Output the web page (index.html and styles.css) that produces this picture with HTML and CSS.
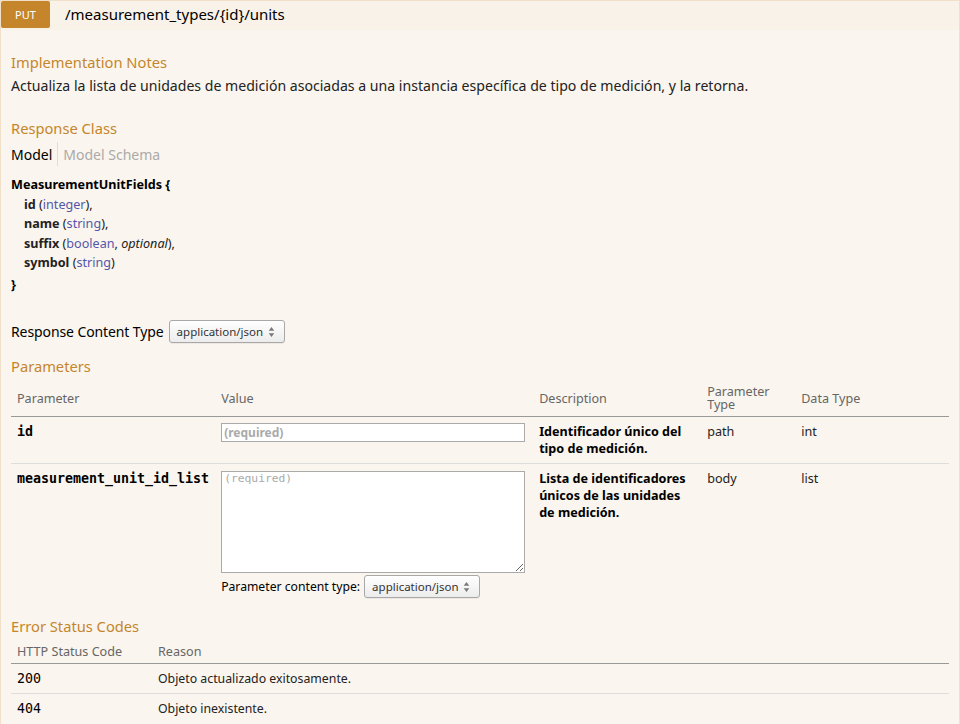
FILE: index.html
```
<!DOCTYPE html>
<html lang="es">
<head>
<meta charset="utf-8">
<title>PUT /measurement_types/{id}/units</title>
<link rel="stylesheet" href="styles.css">
</head>
<body>
<div class="op">
  <div class="heading">
    <span class="method">PUT</span>
    <span class="path">/measurement_types/{id}/units</span>
  </div>
  <div class="content">
    <h4 class="title first">Implementation Notes</h4>
    <p class="notes">Actualiza la lista de unidades de medición asociadas a una instancia específica de tipo de medición, y la retorna.</p>

    <h4 class="title">Response Class</h4>
    <ul class="tabs">
      <li class="tab active">Model</li>
      <li class="tab">Model Schema</li>
    </ul>
    <div class="model">
      <div class="strong">MeasurementUnitFields {</div>
      <div class="prop"><span class="pname">id</span> (<span class="ptype">integer</span>),</div>
      <div class="prop"><span class="pname">name</span> (<span class="ptype">string</span>),</div>
      <div class="prop"><span class="pname">suffix</span> (<span class="ptype">boolean</span>, <span class="popt">optional</span>),</div>
      <div class="prop"><span class="pname">symbol</span> (<span class="ptype">string</span>)</div>
      <div class="strong close">}</div>
    </div>

    <div class="rct">
      <span class="rct-label">Response Content Type</span>
      <span class="select">application/json
        <svg class="arrows" width="7" height="12" viewBox="0 0 7 12"><path d="M3.5 1 L6.3 4.8 L0.7 4.8 Z M3.5 11 L6.3 7.2 L0.7 7.2 Z" fill="#7a7a7a"/></svg>
      </span>
    </div>

    <h4 class="title params-title">Parameters</h4>
    <table class="grid params">
      <thead>
        <tr>
          <th class="c-param">Parameter</th>
          <th class="c-value">Value</th>
          <th class="c-desc">Description</th>
          <th class="c-ptype"><span class="l">Parameter</span><span class="l">Type</span></th>
          <th class="c-dtype">Data Type</th>
        </tr>
      </thead>
      <tbody>
        <tr>
          <td class="code">id</td>
          <td><div class="input">(required)</div></td>
          <td class="desc">Identificador único del tipo de medición.</td>
          <td>path</td>
          <td>int</td>
        </tr>
        <tr>
          <td class="code">measurement_unit_id_list</td>
          <td>
            <textarea class="body-param" placeholder="(required)"></textarea>
            <div class="pct">
              <span class="pct-label">Parameter content type:</span>
              <span class="select">application/json
                <svg class="arrows" width="7" height="12" viewBox="0 0 7 12"><path d="M3.5 1 L6.3 4.8 L0.7 4.8 Z M3.5 11 L6.3 7.2 L0.7 7.2 Z" fill="#7a7a7a"/></svg>
              </span>
            </div>
          </td>
          <td class="desc">Lista de identificadores únicos de las unidades de medición.</td>
          <td>body</td>
          <td>list</td>
        </tr>
      </tbody>
    </table>

    <h4 class="title errors-title">Error Status Codes</h4>
    <table class="grid status">
      <thead>
        <tr>
          <th class="c-code">HTTP Status Code</th>
          <th>Reason</th>
        </tr>
      </thead>
      <tbody>
        <tr>
          <td class="code">200</td>
          <td>Objeto actualizado exitosamente.</td>
        </tr>
        <tr>
          <td class="code">404</td>
          <td>Objeto inexistente.</td>
        </tr>
      </tbody>
    </table>
  </div>
</div>
</body>
</html>
```
FILE: styles.css
```
html, body {
  margin: 0;
  padding: 0;
  background: #ffffff;
}
body {
  font-family: "Noto Sans", "DejaVu Sans", sans-serif;
  color: #222;
}
.op {
  width: 960px;
}
.heading {
  display: flex;
  align-items: flex-start;
  height: 29px;
  background: #f9f2e9;
  border: 1px solid #f0e0ca;
  border-bottom: none;
  box-sizing: content-box;
  width: 958px;
}
.method {
  width: 49px;
  height: 27px;
  background: #c5862b;
  color: #fff;
  font-size: 11px;
  line-height: 27px;
  text-align: center;
  border-radius: 2px;
}
.path {
  margin-left: 15px;
  font-size: 15px;
  line-height: 27px;
  color: #000;
}
.content {
  background: #faf5ee;
  border: 1px solid #f0e0ca;
  border-top: none;
  padding: 0 10px 10px;
  width: 938px;
  height: 693px;
  overflow: hidden;
}
.title {
  margin: 22px 0 0;
  padding: 0 0 3px;
  font-size: 14.7px;
  line-height: 21px;
  font-weight: normal;
  color: #c5862b;
}
.title.first {
  margin-top: 22px;
}
.notes {
  margin: 0;
  font-size: 14.1px;
  line-height: 20px;
  color: #222;
}
.tabs {
  display: flex;
  list-style: none;
  margin: 0;
  padding: 0;
}
.tab {
  font-size: 14px;
  line-height: 20px;
  padding: 3px 5px 1px;
  color: #aaa;
}
.tab.active {
  padding-left: 0;
  color: #000;
  border-right: 1px solid #ddd;
}
.model {
  margin-top: 9px;
  font-size: 12.6px;
  line-height: 19.5px;
}
.model .strong {
  font-weight: bold;
  color: #000;
}
.model .close {
  padding-top: 2px;
}
.prop {
  margin-left: 13px;
  color: #222;
}
.pname {
  font-weight: bold;
  color: #222;
}
.ptype {
  color: #5555aa;
}
.popt {
  font-style: italic;
}
.rct {
  display: flex;
  align-items: center;
  margin-top: 26px;
  height: 23px;
}
.rct-label {
  font-size: 14px;
  letter-spacing: -0.1px;
  color: #000;
  margin-right: 5px;
}
.select {
  display: inline-flex;
  align-items: center;
  justify-content: space-between;
  box-sizing: border-box;
  height: 23px;
  width: 116px;
  padding: 0 9px 0 7px;
  border: 1px solid #a8a8a8;
  border-radius: 3px;
  background: linear-gradient(#ffffff, #ececec);
  box-shadow: 0 1px 0 rgba(0,0,0,0.05);
  font-size: 11.5px;
  color: #333;
}
.params-title {
  margin-top: 13px;
}
.grid {
  width: 100%;
  border-collapse: collapse;
  margin-top: 0;
}
.grid th {
  text-align: left;
  font-weight: normal;
  font-size: 12.6px;
  line-height: 13px;
  color: #666;
  padding: 5px 6px;
  border-bottom: 1px solid #999;
  vertical-align: middle;
}
.grid th .l {
  display: block;
  height: 13px;
}
.grid td {
  font-size: 12.6px;
  line-height: 17px;
  padding: 6px;
  vertical-align: top;
  border-bottom: 1px solid #ddd;
  color: #222;
}
.grid tbody tr:last-child td {
  border-bottom: none;
}
.grid td.code {
  font-family: "DejaVu Sans Mono", monospace;
  font-size: 13.3px;
  font-weight: bold;
  color: #000;
}
.status td.code {
  font-weight: normal;
}
.status td {
  font-size: 12.3px;
}
.grid td.desc {
  font-weight: bold;
  color: #000;
}
.c-param { width: 192px; }
.c-value { width: 306px; }
.c-desc { width: 156px; }
.c-ptype { width: 82px; }
.c-code { width: 129px; }
.input {
  box-sizing: border-box;
  width: 304px;
  height: 19px;
  border: 1px solid #aaa;
  background: #fff;
  font-size: 12px;
  font-weight: bold;
  line-height: 17px;
  padding-left: 2px;
  color: #aaa;
  margin-top: 0;
}
.body-param {
  display: block;
  box-sizing: border-box;
  width: 304px;
  height: 102px;
  margin: 1px 0 0;
  border: 1px solid #aaa;
  background: #fff;
  font-family: "DejaVu Sans Mono", monospace;
  font-size: 11.3px;
  padding: 0 2px;
}
.body-param::placeholder {
  color: #aaa;
}
.pct {
  display: flex;
  align-items: center;
  margin-top: 2px;
  font-size: 12.2px;
  color: #000;
}
.pct-label {
  margin-right: 4px;
}
.errors-title {
  margin-top: 12px;
}
```
